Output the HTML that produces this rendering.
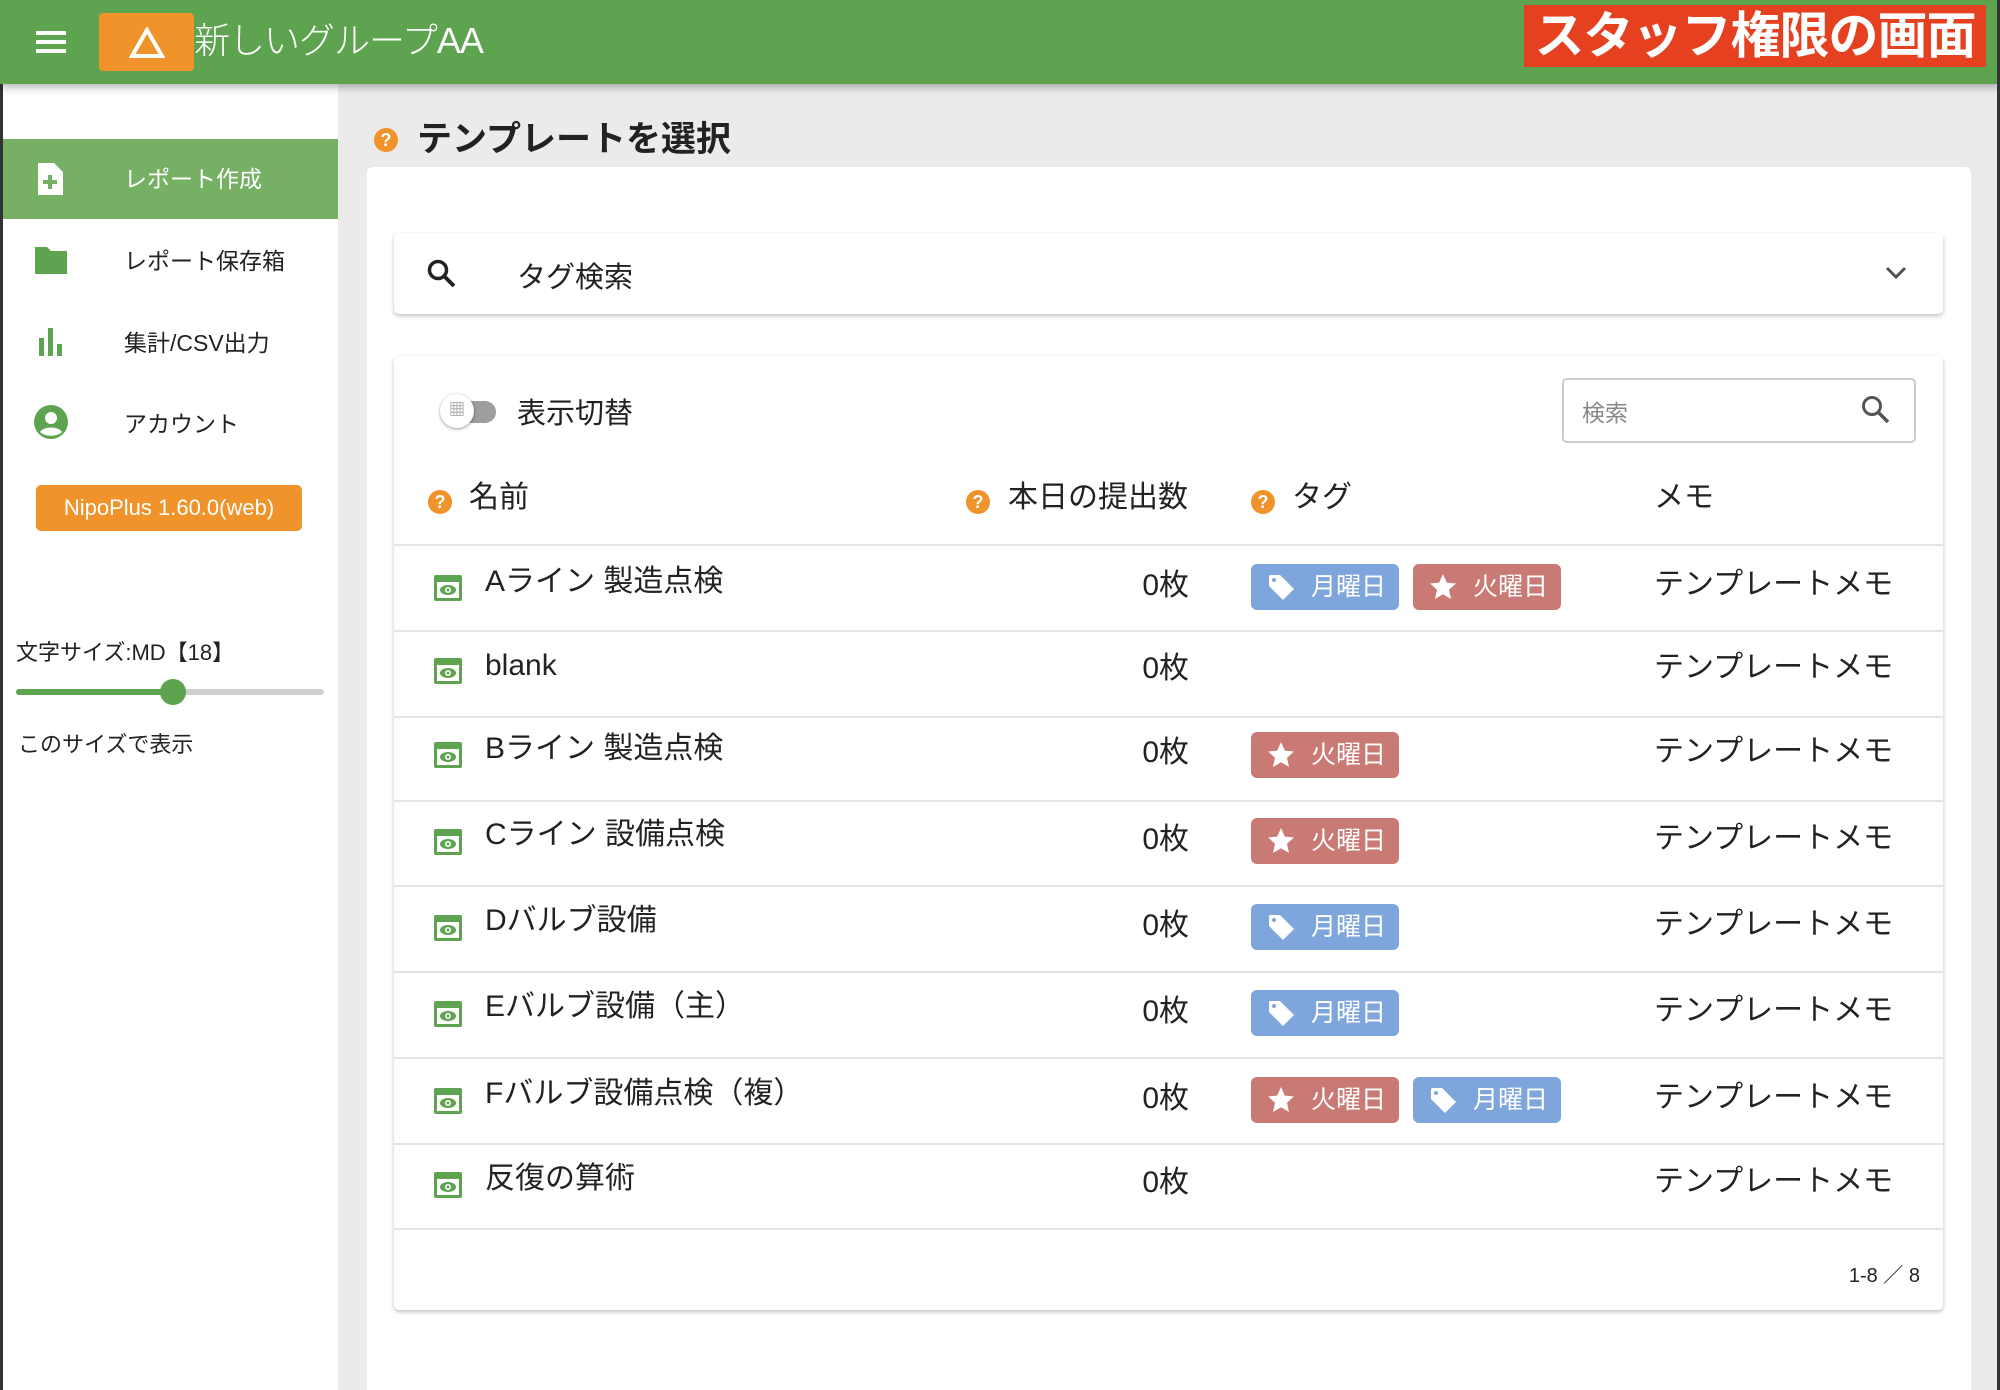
<!DOCTYPE html>
<html><head><meta charset="utf-8"><style>
*{box-sizing:border-box;margin:0;padding:0}
html,body{overflow:hidden}
body{width:2000px;height:1390px;background:#ebebeb;font-family:"Liberation Sans","Noto Sans CJK JP",sans-serif;color:#222;position:relative}
.a{position:absolute;white-space:nowrap}
.hdr{left:0;top:0;width:2000px;height:84px;background:#5ea34f;box-shadow:0 3px 8px rgba(0,0,0,.3);z-index:5}
.side{left:0;top:84px;width:338px;height:1306px;background:#fff;border-left:3px solid #333}
.q{width:24px;height:24px;border-radius:50%;background:#f0932b;color:#fff;font-size:18px;font-weight:bold;text-align:center;line-height:24px}
.row{left:394px;width:1549px;height:86px;border-bottom:2px solid #e4e4e4}
.chip{position:absolute;height:46px;width:148px;border-radius:6px;color:#fff;font-size:25px;line-height:46px;padding-left:60px;white-space:nowrap}
.b{background:#7ea6dd}.r{background:#c97a74}
.chip svg{position:absolute;left:16px;top:9px}
.txt{font-size:30px;line-height:1;margin-top:-2px}
</style></head><body>
<div class="a hdr">
 <div class="a" style="left:36px;top:31px;width:30px;height:4px;background:#fff;box-shadow:0 9px 0 #fff,0 18px 0 #fff"></div>
 <div class="a" style="left:99px;top:13px;width:95px;height:58px;background:#f0932b;border-radius:4px">
  <svg class="a" style="left:30px;top:14px" width="36" height="32" viewBox="0 0 36 32"><path d="M18 3 L33 29 L3 29 Z" fill="none" stroke="#fff" stroke-width="4"/></svg></div>
 <div class="a" style="left:194px;top:12px;font-size:36px;color:#fff;font-weight:300;letter-spacing:-1px">新しいグループAA</div>
 <div class="a" style="left:1524px;top:5px;width:462px;height:62px;background:#e5401f;color:#fff;font-size:50px;font-weight:bold;line-height:62px;text-align:center;letter-spacing:-1px">スタッフ権限の画面</div>
</div>
<div class="a" style="left:1997px;top:0;width:3px;height:1390px;background:#333;z-index:6"></div>
<div class="a side">
 <div class="a" style="left:0;top:55px;width:335px;height:80px;background:#76b065"></div>
 <svg class="a" style="left:32px;top:77px" width="30" height="36" viewBox="0 0 30 36"><path d="M3 2h16l9 9v23H3z" fill="#fff"/><path d="M15 14v14M8 21h14" stroke="#76b065" stroke-width="4"/></svg>
 <div class="a" style="left:121px;top:76px;font-size:23px;color:#fff">レポート作成</div>
 <svg class="a" style="left:30px;top:160px" width="36" height="32" viewBox="0 0 36 32"><path d="M2 3h12l4 4h16v23H2z" fill="#5ea34f"/></svg>
 <div class="a" style="left:121px;top:158px;font-size:23px">レポート保存箱</div>
 <svg class="a" style="left:34px;top:242px" width="28" height="30"><rect x="2" y="12" width="5" height="18" fill="#5ea34f"/><rect x="11" y="2" width="5" height="28" fill="#5ea34f"/><rect x="20" y="18" width="5" height="12" fill="#5ea34f"/></svg>
 <div class="a" style="left:121px;top:240px;font-size:23px">集計/CSV出力</div>
 <svg class="a" style="left:30px;top:320px" width="36" height="36" viewBox="0 0 36 36"><circle cx="18" cy="18" r="17" fill="#5ea34f"/><circle cx="18" cy="14" r="6" fill="#fff"/><path d="M7 28c4-6 18-6 22 0c-5 5-17 5-22 0z" fill="#fff"/></svg>
 <div class="a" style="left:121px;top:321px;font-size:23px">アカウント</div>
 <div class="a" style="left:33px;top:401px;width:266px;height:46px;background:#f0932b;border-radius:5px;color:#fff;font-size:22px;line-height:46px;text-align:center">NipoPlus 1.60.0(web)</div>
 <div class="a" style="left:13px;top:551px;font-size:22px">文字サイズ:MD【18】</div>
 <div class="a" style="left:13px;top:605px;width:308px;height:6px;border-radius:3px;background:#d0d0d0"></div>
 <div class="a" style="left:13px;top:605px;width:157px;height:6px;border-radius:3px;background:#5ea34f"></div>
 <div class="a" style="left:157px;top:595px;width:26px;height:26px;border-radius:50%;background:#5ea34f"></div>
 <div class="a" style="left:15px;top:643px;font-size:22px">このサイズで表示</div>
</div>
<div class="a q" style="left:374px;top:128px">?</div>
<div class="a" style="left:417px;top:111px;font-size:35px;font-weight:bold">テンプレートを選択</div>
<div class="a" style="left:367px;top:167px;width:1604px;height:1260px;background:#fff;border-radius:6px"></div>
<div class="a" style="left:394px;top:233px;width:1549px;height:81px;background:#fff;border-radius:5px;box-shadow:0 2px 4px rgba(0,0,0,.25)">
 <svg class="a" style="left:32px;top:25px" width="32" height="32" viewBox="0 0 32 32"><circle cx="12" cy="12" r="8.5" fill="none" stroke="#222" stroke-width="3.5"/><path d="M18 18l10 10" stroke="#222" stroke-width="4"/></svg>
 <div class="a" style="left:123px;top:21px;font-size:29px">タグ検索</div>
 <svg class="a" style="left:1490px;top:32px" width="24" height="16"><path d="M3 3l9 9l9-9" fill="none" stroke="#555" stroke-width="3"/></svg>
</div>
<div class="a" style="left:394px;top:356px;width:1549px;height:954px;background:#fff;border-radius:5px;box-shadow:0 2px 4px rgba(0,0,0,.25)"></div>
<div class="a" style="left:444px;top:401px;width:52px;height:22px;border-radius:11px;background:#9e9e9e"></div>
<div class="a" style="left:440px;top:394px;width:34px;height:34px;border-radius:50%;background:#fff;box-shadow:0 1px 3px rgba(0,0,0,.4);font-size:16px;color:#888;text-align:center;line-height:34px">▦</div>
<div class="a" style="left:517px;top:390px;font-size:29px">表示切替</div>
<div class="a" style="left:1562px;top:378px;width:354px;height:65px;border:2px solid #ccc;border-radius:5px">
 <div class="a" style="left:18px;top:14px;font-size:23px;color:#888">検索</div>
 <svg class="a" style="left:296px;top:14px" width="32" height="32" viewBox="0 0 32 32"><circle cx="12" cy="12" r="8.5" fill="none" stroke="#555" stroke-width="3"/><path d="M18 18l10 10" stroke="#555" stroke-width="3.5"/></svg>
</div>
<div class="a q" style="left:428px;top:490px">?</div><div class="a txt" style="left:469px;top:485px">名前</div>
<div class="a q" style="left:966px;top:490px">?</div><div class="a txt" style="left:1008px;top:485px">本日の提出数</div>
<div class="a q" style="left:1251px;top:490px">?</div><div class="a txt" style="left:1292px;top:485px">タグ</div>
<div class="a txt" style="left:1654px;top:485px">メモ</div>
<div class="a" style="left:394px;top:544px;width:1549px;height:2px;background:#e4e4e4"></div>
<svg width="0" height="0" style="position:absolute"><defs>
<symbol id="eye" viewBox="0 0 30 30"><rect x="1" y="2" width="28" height="26" rx="2" fill="#5ea34f"/><rect x="4" y="9" width="22" height="16" fill="#fff"/><ellipse cx="15" cy="17" rx="8" ry="5" fill="#5ea34f"/><circle cx="15" cy="17" r="3" fill="#fff"/><circle cx="15" cy="17" r="1.5" fill="#5ea34f"/></symbol>
<symbol id="tag" viewBox="0 0 28 28"><path d="M2 3v10l14 14l11-11L13 2H3z" fill="#fff"/><circle cx="7" cy="7" r="2" fill="#7ea6dd"/></symbol>
<symbol id="star" viewBox="0 0 28 28"><path d="M14 1l3.8 8.6 9.2.9-7 6.2 2 9.3L14 21.2 6 26l2-9.3-7-6.2 9.2-.9z" fill="#fff"/></symbol>
</defs></svg>

<div class="a row" style="top:546px"></div>
<div class="a row" style="top:632px"></div>
<div class="a row" style="top:716px"></div>
<div class="a row" style="top:801px"></div>
<div class="a row" style="top:887px"></div>
<div class="a row" style="top:973px"></div>
<div class="a row" style="top:1059px"></div>
<div class="a row" style="top:1144px"></div>

 <svg class="a" style="left:433px;top:573px" width="30" height="30"><use href="#eye"/></svg>
 <div class="a txt" style="left:485px;top:569px">Aライン 製造点検</div>
 <div class="a txt" style="left:1089px;top:573px;width:100px;text-align:right">0枚</div>
 <div class="chip b" style="left:1251px;top:564px"><svg width="28" height="28"><use href="#tag"/></svg>月曜日</div>
 <div class="chip r" style="left:1413px;top:564px"><svg width="28" height="28"><use href="#star"/></svg>火曜日</div>
 <div class="a txt" style="left:1654px;top:572px">テンプレートメモ</div>

 <svg class="a" style="left:433px;top:656px" width="30" height="30"><use href="#eye"/></svg>
 <div class="a txt" style="left:485px;top:653px">blank</div>
 <div class="a txt" style="left:1089px;top:656px;width:100px;text-align:right">0枚</div>
 <div class="a txt" style="left:1654px;top:655px">テンプレートメモ</div>

 <svg class="a" style="left:433px;top:740px" width="30" height="30"><use href="#eye"/></svg>
 <div class="a txt" style="left:485px;top:736px">Bライン 製造点検</div>
 <div class="a txt" style="left:1089px;top:740px;width:100px;text-align:right">0枚</div>
 <div class="chip r" style="left:1251px;top:732px"><svg width="28" height="28"><use href="#star"/></svg>火曜日</div>
 <div class="a txt" style="left:1654px;top:739px">テンプレートメモ</div>

 <svg class="a" style="left:433px;top:827px" width="30" height="30"><use href="#eye"/></svg>
 <div class="a txt" style="left:485px;top:822px">Cライン 設備点検</div>
 <div class="a txt" style="left:1089px;top:827px;width:100px;text-align:right">0枚</div>
 <div class="chip r" style="left:1251px;top:818px"><svg width="28" height="28"><use href="#star"/></svg>火曜日</div>
 <div class="a txt" style="left:1654px;top:826px">テンプレートメモ</div>

 <svg class="a" style="left:433px;top:913px" width="30" height="30"><use href="#eye"/></svg>
 <div class="a txt" style="left:485px;top:908px">Dバルブ設備</div>
 <div class="a txt" style="left:1089px;top:913px;width:100px;text-align:right">0枚</div>
 <div class="chip b" style="left:1251px;top:904px"><svg width="28" height="28"><use href="#tag"/></svg>月曜日</div>
 <div class="a txt" style="left:1654px;top:912px">テンプレートメモ</div>

 <svg class="a" style="left:433px;top:999px" width="30" height="30"><use href="#eye"/></svg>
 <div class="a txt" style="left:485px;top:994px">Eバルブ設備（主）</div>
 <div class="a txt" style="left:1089px;top:999px;width:100px;text-align:right">0枚</div>
 <div class="chip b" style="left:1251px;top:990px"><svg width="28" height="28"><use href="#tag"/></svg>月曜日</div>
 <div class="a txt" style="left:1654px;top:998px">テンプレートメモ</div>

 <svg class="a" style="left:433px;top:1086px" width="30" height="30"><use href="#eye"/></svg>
 <div class="a txt" style="left:485px;top:1081px">Fバルブ設備点検（複）</div>
 <div class="a txt" style="left:1089px;top:1086px;width:100px;text-align:right">0枚</div>
 <div class="chip r" style="left:1251px;top:1077px"><svg width="28" height="28"><use href="#star"/></svg>火曜日</div>
 <div class="chip b" style="left:1413px;top:1077px"><svg width="28" height="28"><use href="#tag"/></svg>月曜日</div>
 <div class="a txt" style="left:1654px;top:1085px">テンプレートメモ</div>

 <svg class="a" style="left:433px;top:1170px" width="30" height="30"><use href="#eye"/></svg>
 <div class="a txt" style="left:485px;top:1166px">反復の算術</div>
 <div class="a txt" style="left:1089px;top:1170px;width:100px;text-align:right">0枚</div>
 <div class="a txt" style="left:1654px;top:1169px">テンプレートメモ</div>
<div class="a" style="left:1800px;top:1259px;width:120px;text-align:right;font-size:20px">1-8 ／ 8</div>
</body></html>
